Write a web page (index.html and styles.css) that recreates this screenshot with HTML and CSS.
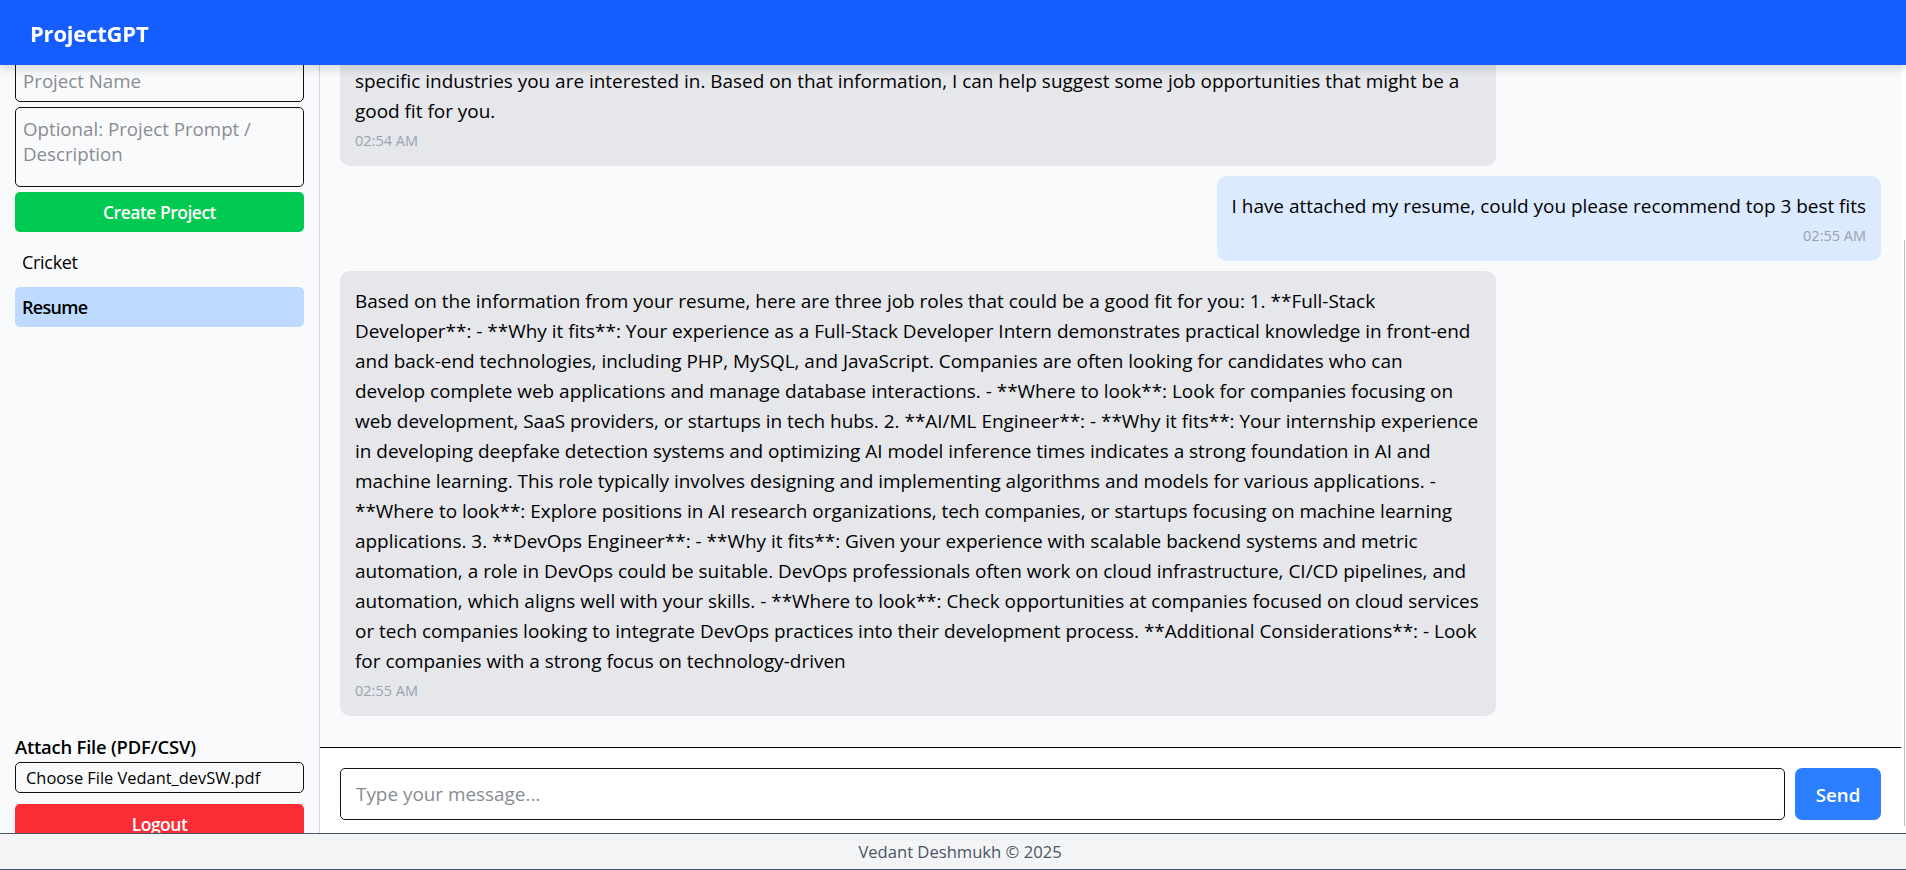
FILE: index.html
```html
<!DOCTYPE html>
<html lang="en">
<head>
<meta charset="utf-8">
<title>ProjectGPT</title>
<link rel="stylesheet" href="styles.css">
</head>
<body>
<header class="header">ProjectGPT</header>

<div class="app">
  <aside class="sidebar">
    <div class="side-top">
      <input class="field" type="text" placeholder="Project Name">
      <textarea class="field area" placeholder="Optional: Project Prompt / Description"></textarea>
      <button class="btn btn-create">Create Project</button>
      <ul class="projects">
        <li class="project">Cricket</li>
        <li class="project active">Resume</li>
      </ul>
    </div>
    <div class="side-bottom">
      <div class="attach-label">Attach File (PDF/CSV)</div>
      <div class="file-box">Choose File Vedant_devSW.pdf</div>
      <button class="btn btn-logout">Logout</button>
    </div>
  </aside>

  <main class="main">
    <section class="messages">
      <div class="msg bot">
        <div class="msg-text">specific industries you are interested in. Based on that information, I can help suggest some job opportunities that might be a good fit for you.</div>
        <div class="time">02:54 AM</div>
      </div>
      <div class="msg user">
        <div class="msg-text">I have attached my resume, could you please recommend top 3 best fits</div>
        <div class="time">02:55 AM</div>
      </div>
      <div class="msg bot">
        <div class="msg-text">Based on the information from your resume, here are three job roles that could be a good fit for you: 1. **Full-Stack<br>
Developer**: - **Why it fits**: Your experience as a Full-Stack Developer Intern demonstrates practical knowledge in front-end<br>
and back-end technologies, including PHP, MySQL, and JavaScript. Companies are often looking for candidates who can<br>
develop complete web applications and manage database interactions. - **Where to look**: Look for companies focusing on<br>
web development, SaaS providers, or startups in tech hubs. 2. **AI/ML Engineer**: - **Why it fits**: Your internship experience<br>
in developing deepfake detection systems and optimizing AI model inference times indicates a strong foundation in AI and<br>
machine learning. This role typically involves designing and implementing algorithms and models for various applications. -<br>
**Where to look**: Explore positions in AI research organizations, tech companies, or startups focusing on machine learning<br>
applications. 3. **DevOps Engineer**: - **Why it fits**: Given your experience with scalable backend systems and metric<br>
automation, a role in DevOps could be suitable. DevOps professionals often work on cloud infrastructure, CI/CD pipelines, and<br>
automation, which aligns well with your skills. - **Where to look**: Check opportunities at companies focused on cloud services<br>
or tech companies looking to integrate DevOps practices into their development process. **Additional Considerations**: - Look<br>
for companies with a strong focus on technology-driven</div>
        <div class="time">02:55 AM</div>
      </div>
    </section>
    <form class="composer">
      <input class="chat-input" type="text" placeholder="Type your message...">
      <button class="send" type="button">Send</button>
    </form>
  </main>
  <div class="gutter"><div class="gutter-line"></div></div>
</div>

<footer class="footer">Vedant Deshmukh © 2025</footer>
</body>
</html>
```

FILE: styles.css
```css
* { box-sizing: border-box; }

html, body {
  margin: 0;
  height: 870px;
  overflow: hidden;
}

body {
  font-family: "Open Sans", "Noto Sans", sans-serif;
  color: #101828;
  background: #f9fafb;
  font-size: 18.95px;
}

.header {
  position: fixed;
  top: 0;
  left: 0;
  right: 0;
  height: 65px;
  background: #155dfc;
  color: #fff;
  display: flex;
  align-items: center;
  padding: 0 30px;
  font-size: 22px;
  font-weight: 700;
  letter-spacing: -0.2px;
  box-shadow: 0 5px 8px rgba(0, 0, 0, 0.12);
  z-index: 10;
}

.app {
  display: flex;
  height: 870px;
}

/* Sidebar */
.sidebar {
  width: 320px;
  flex-shrink: 0;
  background: #f9fafb;
  border-right: 1px solid #d1d5dc;
  padding: 58px 15px 26px;
  display: flex;
  flex-direction: column;
  justify-content: space-between;
}

.side-top {
  display: flex;
  flex-direction: column;
}

.field {
  display: block;
  width: 100%;
  height: 44px;
  border: 1px solid #111;
  border-radius: 5px;
  padding: 0 7px;
  font-family: inherit;
  font-size: 18.7px;
  color: #101828;
  background: transparent;
  outline: none;
}

.field::placeholder,
.chat-input::placeholder {
  color: #898c92;
}

.area {
  margin-top: 5px;
  height: 80px;
  padding: 8px 7px;
  line-height: 25px;
  resize: none;
}

.btn {
  display: block;
  width: 100%;
  height: 40px;
  border: none;
  border-radius: 5px;
  color: #fff;
  font-family: inherit;
  font-size: 17.5px;
  font-weight: 600;
  letter-spacing: -0.5px;
  padding: 0;
}

.btn-create {
  margin-top: 5px;
  background: #00c951;
}

.projects {
  list-style: none;
  margin: 10px 0 0;
  padding: 0;
  display: flex;
  flex-direction: column;
  gap: 5px;
}

.project {
  height: 40px;
  display: flex;
  align-items: center;
  padding: 0 7px;
  border-radius: 5px;
  font-size: 18px;
  letter-spacing: -0.3px;
  color: #000;
}

.project.active {
  background: #bedbff;
  font-weight: 600;
  letter-spacing: -0.7px;
}

.attach-label {
  font-size: 18.4px;
  font-weight: 600;
  line-height: 25px;
  margin-bottom: 3px;
  letter-spacing: -0.2px;
  color: #000;
}

.file-box {
  height: 31px;
  border: 1px solid #111;
  border-radius: 5px;
  padding: 0 10px;
  display: flex;
  align-items: center;
  font-size: 16.4px;
  color: #000;
}

.btn-logout {
  margin-top: 11px;
  background: #fb2c36;
}

/* Main chat */
.main {
  flex: 1;
  min-width: 0;
  display: flex;
  flex-direction: column;
  background: #f9fafb;
}

.messages {
  flex: 1;
  min-height: 0;
  overflow: hidden;
  display: flex;
  flex-direction: column;
  justify-content: flex-end;
  gap: 10px;
  padding: 0 20px 31px;
}

.msg {
  flex-shrink: 0;
  max-width: 75%;
  padding: 15px;
  border-radius: 10px;
  font-size: 18.95px;
  line-height: 30px;
  color: #000;
}

.bot {
  align-self: flex-start;
  width: 75%;
  background: #e5e7eb;
  padding-right: 6px;
}

.user {
  align-self: flex-end;
  background: #dbeafe;
}

.time {
  margin-top: 5px;
  font-size: 14.5px;
  line-height: 20px;
  color: #99a1af;
}

.user .time {
  text-align: right;
}

.composer {
  margin: 0;
  background: #fff;
  border-top: 1px solid #000;
  padding: 20px 20px 50px;
  display: flex;
  gap: 10px;
}

.chat-input {
  flex: 1;
  height: 52px;
  border: 1px solid #111;
  border-radius: 5px;
  padding: 0 15px;
  font-family: inherit;
  font-size: 18.9px;
  outline: none;
  background: #fff;
}

.send {
  width: 86px;
  height: 52px;
  border: none;
  border-radius: 7px;
  background: #2b7fff;
  color: #fff;
  font-family: inherit;
  font-size: 18.7px;
  font-weight: 600;
}

.gutter {
  width: 5px;
  flex-shrink: 0;
  background: #fff;
  padding: 240px 0 44px 3px;
}

.gutter-line {
  height: 100%;
  border-left: 1px solid #b8bcc4;
}

.footer {
  position: fixed;
  left: 0;
  right: 0;
  bottom: 0;
  height: 37px;
  background: #f3f4f6;
  border-top: 1px solid #4a5565;
  border-bottom: 1px solid #4a5565;
  display: flex;
  align-items: center;
  justify-content: center;
  padding-left: 14px;
  font-size: 16.6px;
  color: #4a5565;
  z-index: 10;
}
```
